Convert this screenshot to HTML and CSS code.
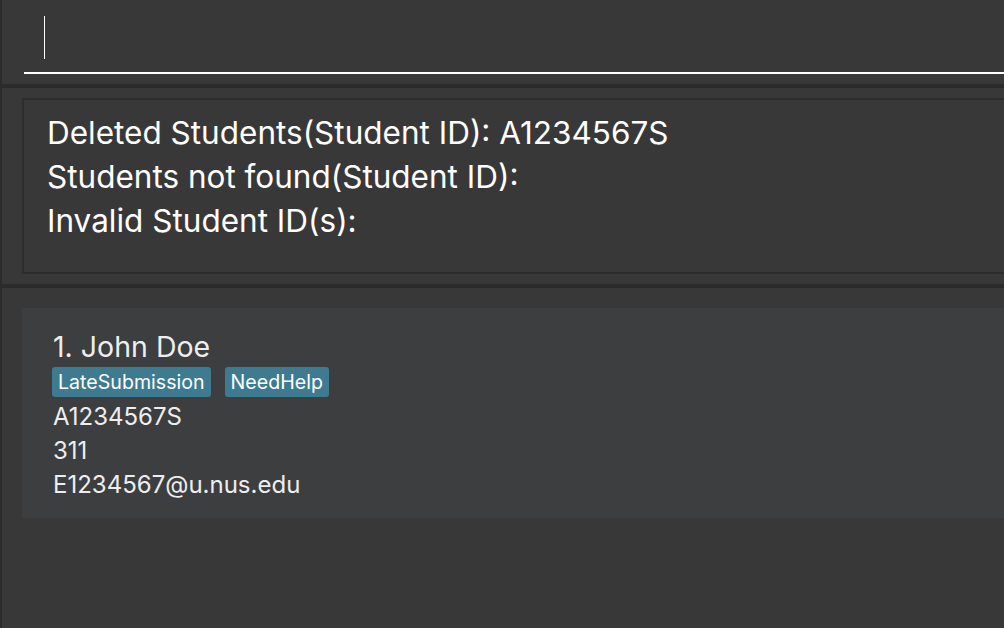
FILE: index.html
```html
<!DOCTYPE html>
<html>
<head>
<meta charset="utf-8">
<link rel="stylesheet" href="styles.css">
</head>
<body>
<div class="app">
  <div class="command">
    <div class="command-field"><span class="caret"></span></div>
  </div>
  <div class="sep"></div>
  <div class="result-pane">
    <div class="result-box">
      <div class="result-line">Deleted Students(Student ID): A1234567S</div>
      <div class="result-line">Students not found(Student ID):</div>
      <div class="result-line">Invalid Student ID(s):</div>
    </div>
  </div>
  <div class="sep"></div>
  <div class="list-pane">
    <div class="card">
      <div class="name">1. John Doe</div>
      <div class="tags"><span class="tag">LateSubmission</span><span class="tag">NeedHelp</span></div>
      <div class="field">A1234567S</div>
      <div class="field">311</div>
      <div class="field">E1234567@u.nus.edu</div>
    </div>
  </div>
</div>
</body>
</html>
```
FILE: styles.css
```css
html, body {
  margin: 0;
  padding: 0;
  height: 100%;
  overflow: hidden;
}
body {
  background: #383838;
  font-family: Inter, "Noto Sans", sans-serif;
}
.app {
  height: 628px;
  border-left: 2px solid #2c2c2c;
  display: flex;
  flex-direction: column;
}
.command {
  height: 84px;
  padding-left: 22px;
  box-sizing: border-box;
}
.command-field {
  height: 74px;
  border-bottom: 2px solid #ffffff;
  box-sizing: border-box;
  padding-top: 16px;
  padding-left: 20px;
}
.caret {
  display: block;
  width: 1px;
  height: 43px;
  background: #ffffff;
}
.sep {
  height: 4px;
  background: #2b2b2b;
}
.result-pane {
  height: 196px;
  padding: 10px 0 10px 20px;
  box-sizing: border-box;
}
.result-box {
  height: 176px;
  border: 2px solid #2d2d2d;
  border-right: none;
  box-sizing: border-box;
  padding: 11px 0 0 23px;
  color: #ffffff;
  font-size: 31.5px;
  line-height: 44px;
}
.result-line {
  white-space: nowrap;
}
.list-pane {
  flex: 1;
  padding: 20px 0 0 20px;
}
.card {
  height: 210px;
  background: #3c3e40;
  box-sizing: border-box;
  padding: 20px 0 0 31px;
  color: #eeeeee;
}
.name {
  font-size: 28.5px;
  line-height: 38px;
}
.tags {
  display: flex;
  gap: 14px;
  margin: 1px 0 3px -1px;
}
.tag {
  background: #3e7b91;
  color: #ffffff;
  font-size: 19.6px;
  line-height: 30px;
  padding: 0 6px;
  border-radius: 3px;
}
.field {
  font-size: 24px;
  line-height: 34px;
}
```
